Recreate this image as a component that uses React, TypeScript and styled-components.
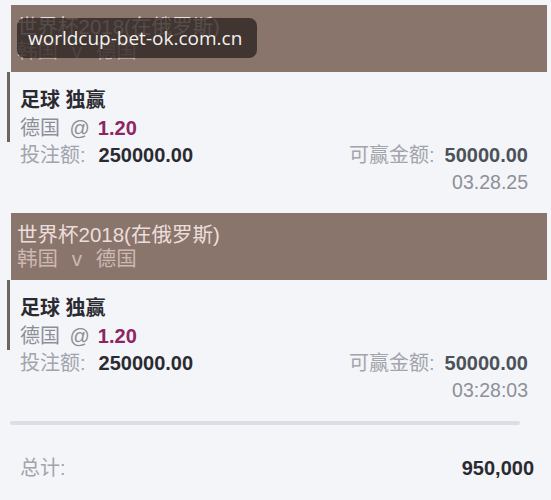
import React from "react";
import styled, { createGlobalStyle } from "styled-components";

const GlobalStyle = createGlobalStyle`
  html, body {
    margin: 0;
    padding: 0;
    background: #f4f5f9;
  }
  body {
    font-family: "Liberation Sans", "Noto Sans CJK SC", sans-serif;
  }
`;

const Page = styled.div`
  position: relative;
  width: 551px;
  height: 500px;
  padding-top: 5px;
  box-sizing: border-box;
  overflow: hidden;
  background: #f4f5f9;
`;

const Card = styled.div`
  display: flex;
  flex-direction: column;
  margin-bottom: 18px;
`;

const Header = styled.div`
  margin-left: 11px;
  margin-right: 4px;
  padding: 10px 6px 9px;
  background: #8a756c;
  display: flex;
  flex-direction: column;
  font-size: 20.5px;
  line-height: 24px;
`;

const Title = styled.div`
  color: #eadedb;
`;

const Teams = styled.div`
  color: #cdb8b2;
  word-spacing: 8px;
`;

const Selection = styled.div`
  margin-left: 7px;
  padding: 14px 0 0 10px;
  border-left: 3px solid #6c6663;
  font-size: 20px;
  line-height: 28px;
`;

const Market = styled.div`
  font-weight: bold;
  color: #2a2a31;
`;

const Pick = styled.div`
  color: #8d8f97;
  word-spacing: 4px;
`;

const Odds = styled.span`
  margin-left: 8px;
  font-weight: bold;
  color: #8e2461;
`;

const Row = styled.div`
  display: flex;
  justify-content: space-between;
  align-items: center;
  padding: 0 23px 0 20px;
  font-size: 20px;
  line-height: 27px;
`;

const Field = styled.div`
  display: flex;
  align-items: center;
`;

const Label = styled.span`
  color: #a2a4ac;
`;

const Value = styled.span<{ $muted?: boolean }>`
  margin-left: ${(p) => (p.$muted ? "10px" : "13px")};
  font-weight: bold;
  color: ${(p) => (p.$muted ? "#4b525a" : "#2a2a31")};
`;

const Time = styled.div`
  align-self: flex-end;
  padding-right: 23px;
  font-size: 19.5px;
  line-height: 26px;
  color: #8e9098;
`;

const Divider = styled.div`
  margin: 8px 31px 0 10px;
  height: 4px;
  border-radius: 2px;
  background: #dcdde5;
`;

const Total = styled(Row)`
  padding: 0 17px 0 20px;
  margin-top: 29px;
  line-height: 28px;
`;

const Watermark = styled.div`
  position: absolute;
  left: 17px;
  top: 18px;
  width: 240px;
  height: 40px;
  border-radius: 8px;
  background: rgba(44, 34, 32, 0.78);
  color: #f4f1ef;
  font-family: "Open Sans", "DejaVu Sans", sans-serif;
  font-size: 19px;
  line-height: 40px;
  padding-left: 11px;
  box-sizing: border-box;
`;

type Bet = {
  league: string;
  teams: string;
  market: string;
  pick: string;
  odds: string;
  stake: string;
  win: string;
  time: string;
};

const bets: Bet[] = [
  {
    league: "世界杯2018(在俄罗斯)",
    teams: "韩国 v 德国",
    market: "足球 独赢",
    pick: "德国 @",
    odds: "1.20",
    stake: "250000.00",
    win: "50000.00",
    time: "03.28.25",
  },
  {
    league: "世界杯2018(在俄罗斯)",
    teams: "韩国 v 德国",
    market: "足球 独赢",
    pick: "德国 @",
    odds: "1.20",
    stake: "250000.00",
    win: "50000.00",
    time: "03:28:03",
  },
];

export default function App() {
  return (
    <>
      <GlobalStyle />
      <Page>
        {bets.map((b, i) => (
          <Card key={i}>
            <Header>
              <Title>{b.league}</Title>
              <Teams>{b.teams}</Teams>
            </Header>
            <Selection>
              <Market>{b.market}</Market>
              <Pick>
                {b.pick}
                <Odds>{b.odds}</Odds>
              </Pick>
            </Selection>
            <Row>
              <Field>
                <Label>投注额:</Label>
                <Value>{b.stake}</Value>
              </Field>
              <Field>
                <Label>可赢金额:</Label>
                <Value $muted>{b.win}</Value>
              </Field>
            </Row>
            <Time>{b.time}</Time>
          </Card>
        ))}
        <Divider />
        <Total>
          <Label>总计:</Label>
          <Value>950,000</Value>
        </Total>
        <Watermark>worldcup-bet-ok.com.cn</Watermark>
      </Page>
    </>
  );
}
